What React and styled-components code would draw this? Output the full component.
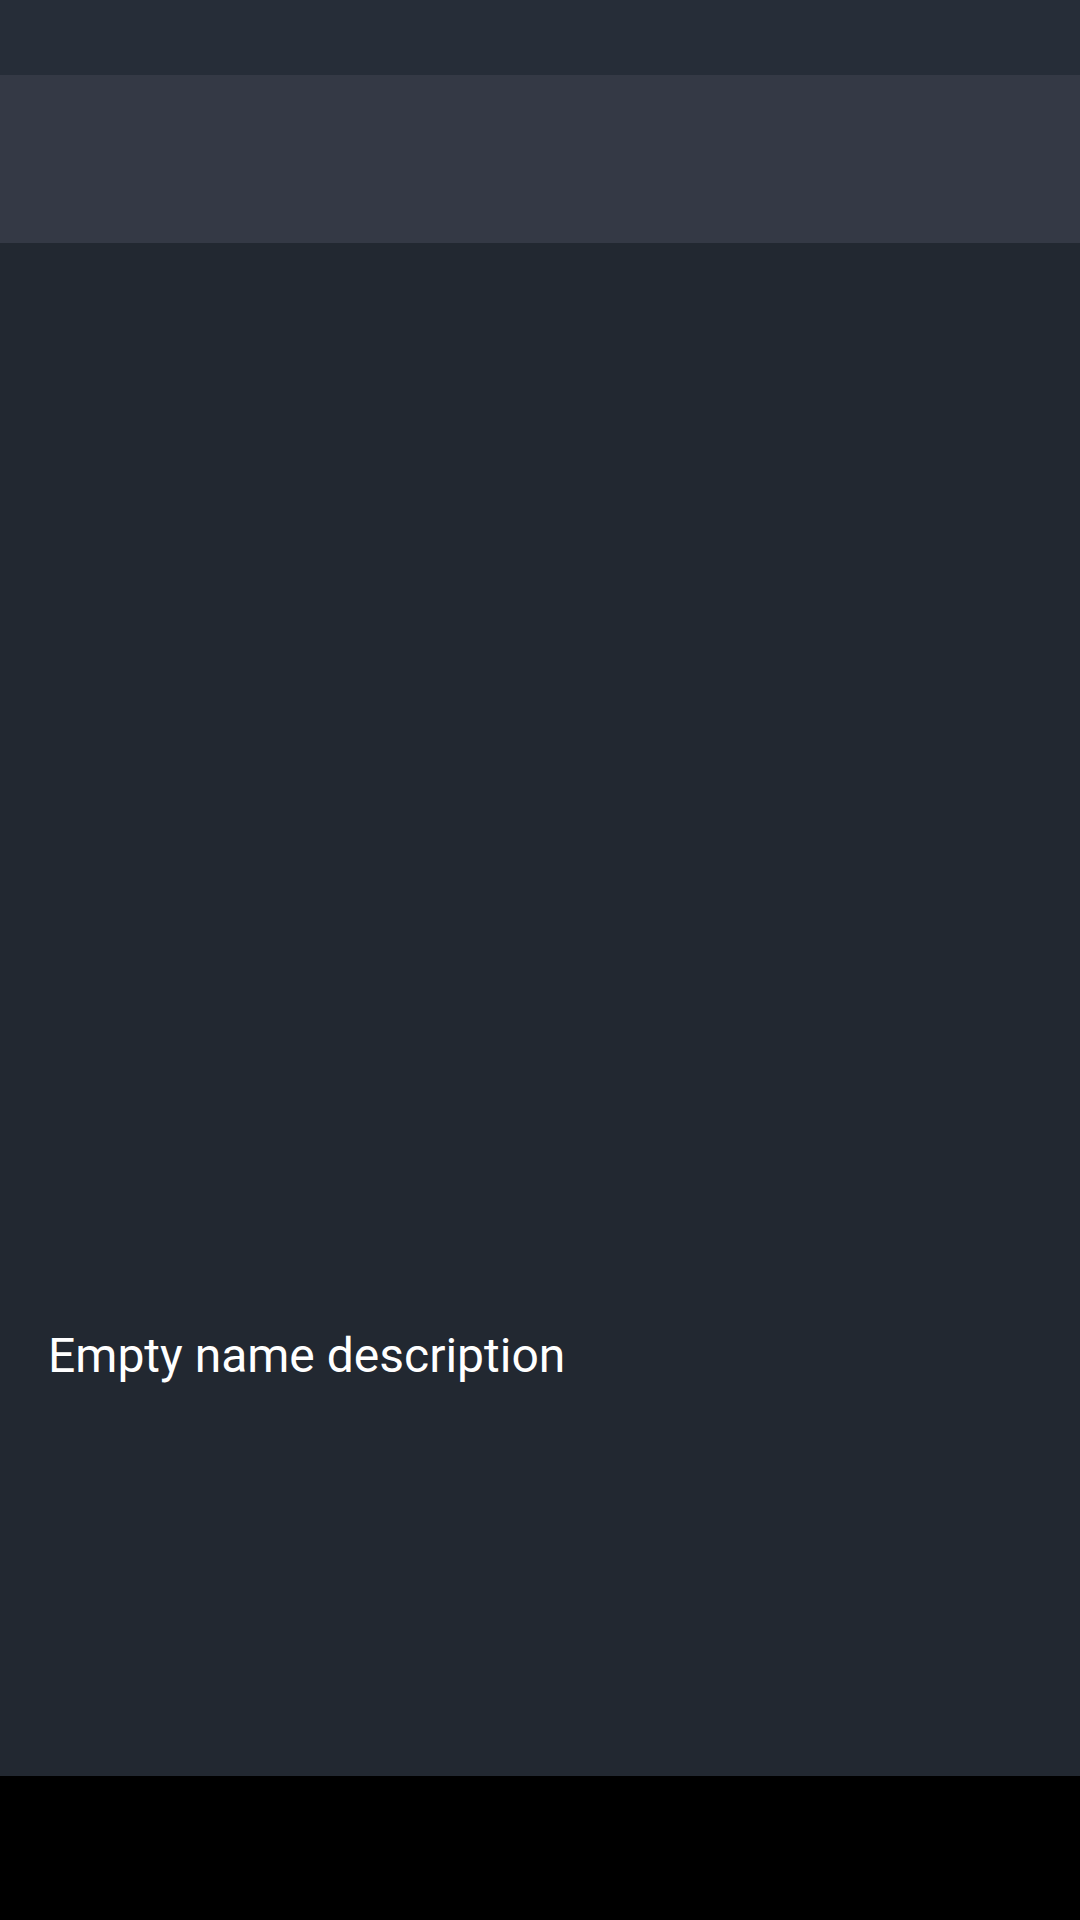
import React from 'react'
import styled, { createGlobalStyle } from 'styled-components'

const Global = createGlobalStyle`
  html, body { margin: 0; padding: 0; background: #000; }
  body { font-family: Roboto, "Noto Sans", sans-serif; }
`;

const Screen = styled.div`
  width: 1080px;
  height: 1920px;
  display: flex;
  flex-direction: column;
  overflow: hidden;
`;

const StatusBar = styled.div`
  height: 75px;
  flex: none;
  background: #262d38;
`;

const AppBar = styled.div`
  height: 168px;
  flex: none;
  background: #343945;
`;

const Content = styled.main`
  flex: 1;
  background: #222831;
  padding: 1084px 48px 0;
  box-sizing: border-box;
`;

const Description = styled.div`
  color: #ffffff;
  font-size: 48px;
  line-height: normal;
  font-weight: 400;
`;

const NavBar = styled.div`
  height: 144px;
  flex: none;
  background: #000;
`;

const App = () => {
  return (
    <>
      <Global />
      <Screen>
        <StatusBar />
        <AppBar />
        <Content>
          <Description>Empty name description</Description>
        </Content>
        <NavBar />
      </Screen>
    </>
  )
}

export default App
